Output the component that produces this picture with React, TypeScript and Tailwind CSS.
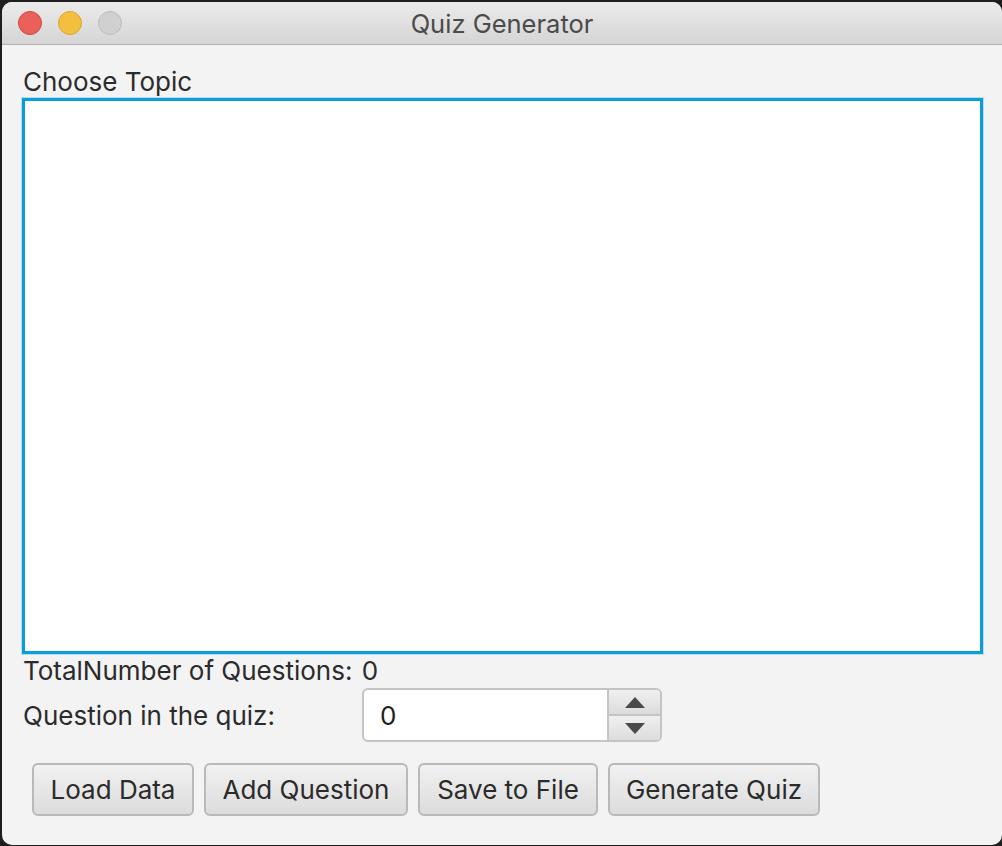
const font = { fontFamily: "Inter, 'Liberation Sans', sans-serif" };

function Light({ color, border }: { color: string; border: string }) {
  return <span className={`block w-6 h-6 rounded-full border ${color} ${border}`} />;
}

function Btn({ label, width }: { label: string; width: string }) {
  return (
    <button
      className={`h-[53px] ${width} rounded-[6px] border-2 border-[#b9b9b9] bg-gradient-to-b from-[#f1f1f1] to-[#dcdcdc] text-[26px] text-[#2b2b2b] flex items-center justify-center`}
    >
      {label}
    </button>
  );
}

export default function App() {
  return (
    <div className="w-[1002px] h-[846px] bg-[#1e1e1e] pl-[2px] pt-[2px]" style={font}>
      <div className="w-[1000px] h-[843px] rounded-[10px] overflow-hidden bg-[#f3f3f3] flex flex-col">
        <div className="h-[43px] shrink-0 bg-gradient-to-b from-[#ebebeb] to-[#d5d5d5] border-b border-[#b1b1b1] relative flex items-center justify-center">
          <div className="absolute left-[16px] top-[9px] flex gap-4">
            <Light color="bg-[#e96159]" border="border-[#d1483f]" />
            <Light color="bg-[#f4bf3e]" border="border-[#d9a52e]" />
            <Light color="bg-[#d0d0d0]" border="border-[#bcbcbc]" />
          </div>
          <span className="text-[25.5px] leading-[30px] pt-[2px] text-[#4b4b4b]">Quiz Generator</span>
        </div>
        <div className="flex flex-col pl-[20px] pr-[19px] pt-[21px]">
          <div className="text-[26px] leading-[32px] text-[#2b2b2b] pl-[1px]">Choose Topic</div>
          <div className="h-[556px] border-[3px] border-[#0a9dd8] bg-white shadow-[0_0_0_1px_#b7def0]" />
          <div className="text-[26px] leading-[30px] text-[#2b2b2b] pl-[1px] mt-[2px]">
            TotalNumber of Questions: <span className="ml-[2px]">0</span>
          </div>
          <div className="flex items-center mt-[2px]">
            <div className="w-[340px] text-[26px] text-[#2b2b2b] pl-[1px]">Question in the quiz:</div>
            <div className="w-[300px] h-[54px] flex rounded-[6px] border-2 border-[#c4c4c4] bg-white overflow-hidden">
              <div className="flex-1 flex items-center pl-[16px] text-[26px] text-[#1e1e1e]">0</div>
              <div className="w-[53px] flex flex-col border-l-2 border-[#c4c4c4]">
                <div className="flex-1 flex items-center justify-center bg-gradient-to-b from-[#f0f0f0] to-[#dcdcdc] border-b-2 border-[#c4c4c4]">
                  <svg width="20" height="11" viewBox="0 0 20 11">
                    <polygon points="10,0 20,11 0,11" fill="#4a4a4a" />
                  </svg>
                </div>
                <div className="flex-1 flex items-center justify-center bg-gradient-to-b from-[#f0f0f0] to-[#dcdcdc]">
                  <svg width="20" height="11" viewBox="0 0 20 11">
                    <polygon points="0,0 20,0 10,11" fill="#4a4a4a" />
                  </svg>
                </div>
              </div>
            </div>
          </div>
          <div className="flex gap-[10px] mt-[21px] pl-[10px]">
            <Btn label="Load Data" width="w-[162px]" />
            <Btn label="Add Question" width="w-[204px]" />
            <Btn label="Save to File" width="w-[180px]" />
            <Btn label="Generate Quiz" width="w-[212px]" />
          </div>
        </div>
      </div>
    </div>
  );
}
